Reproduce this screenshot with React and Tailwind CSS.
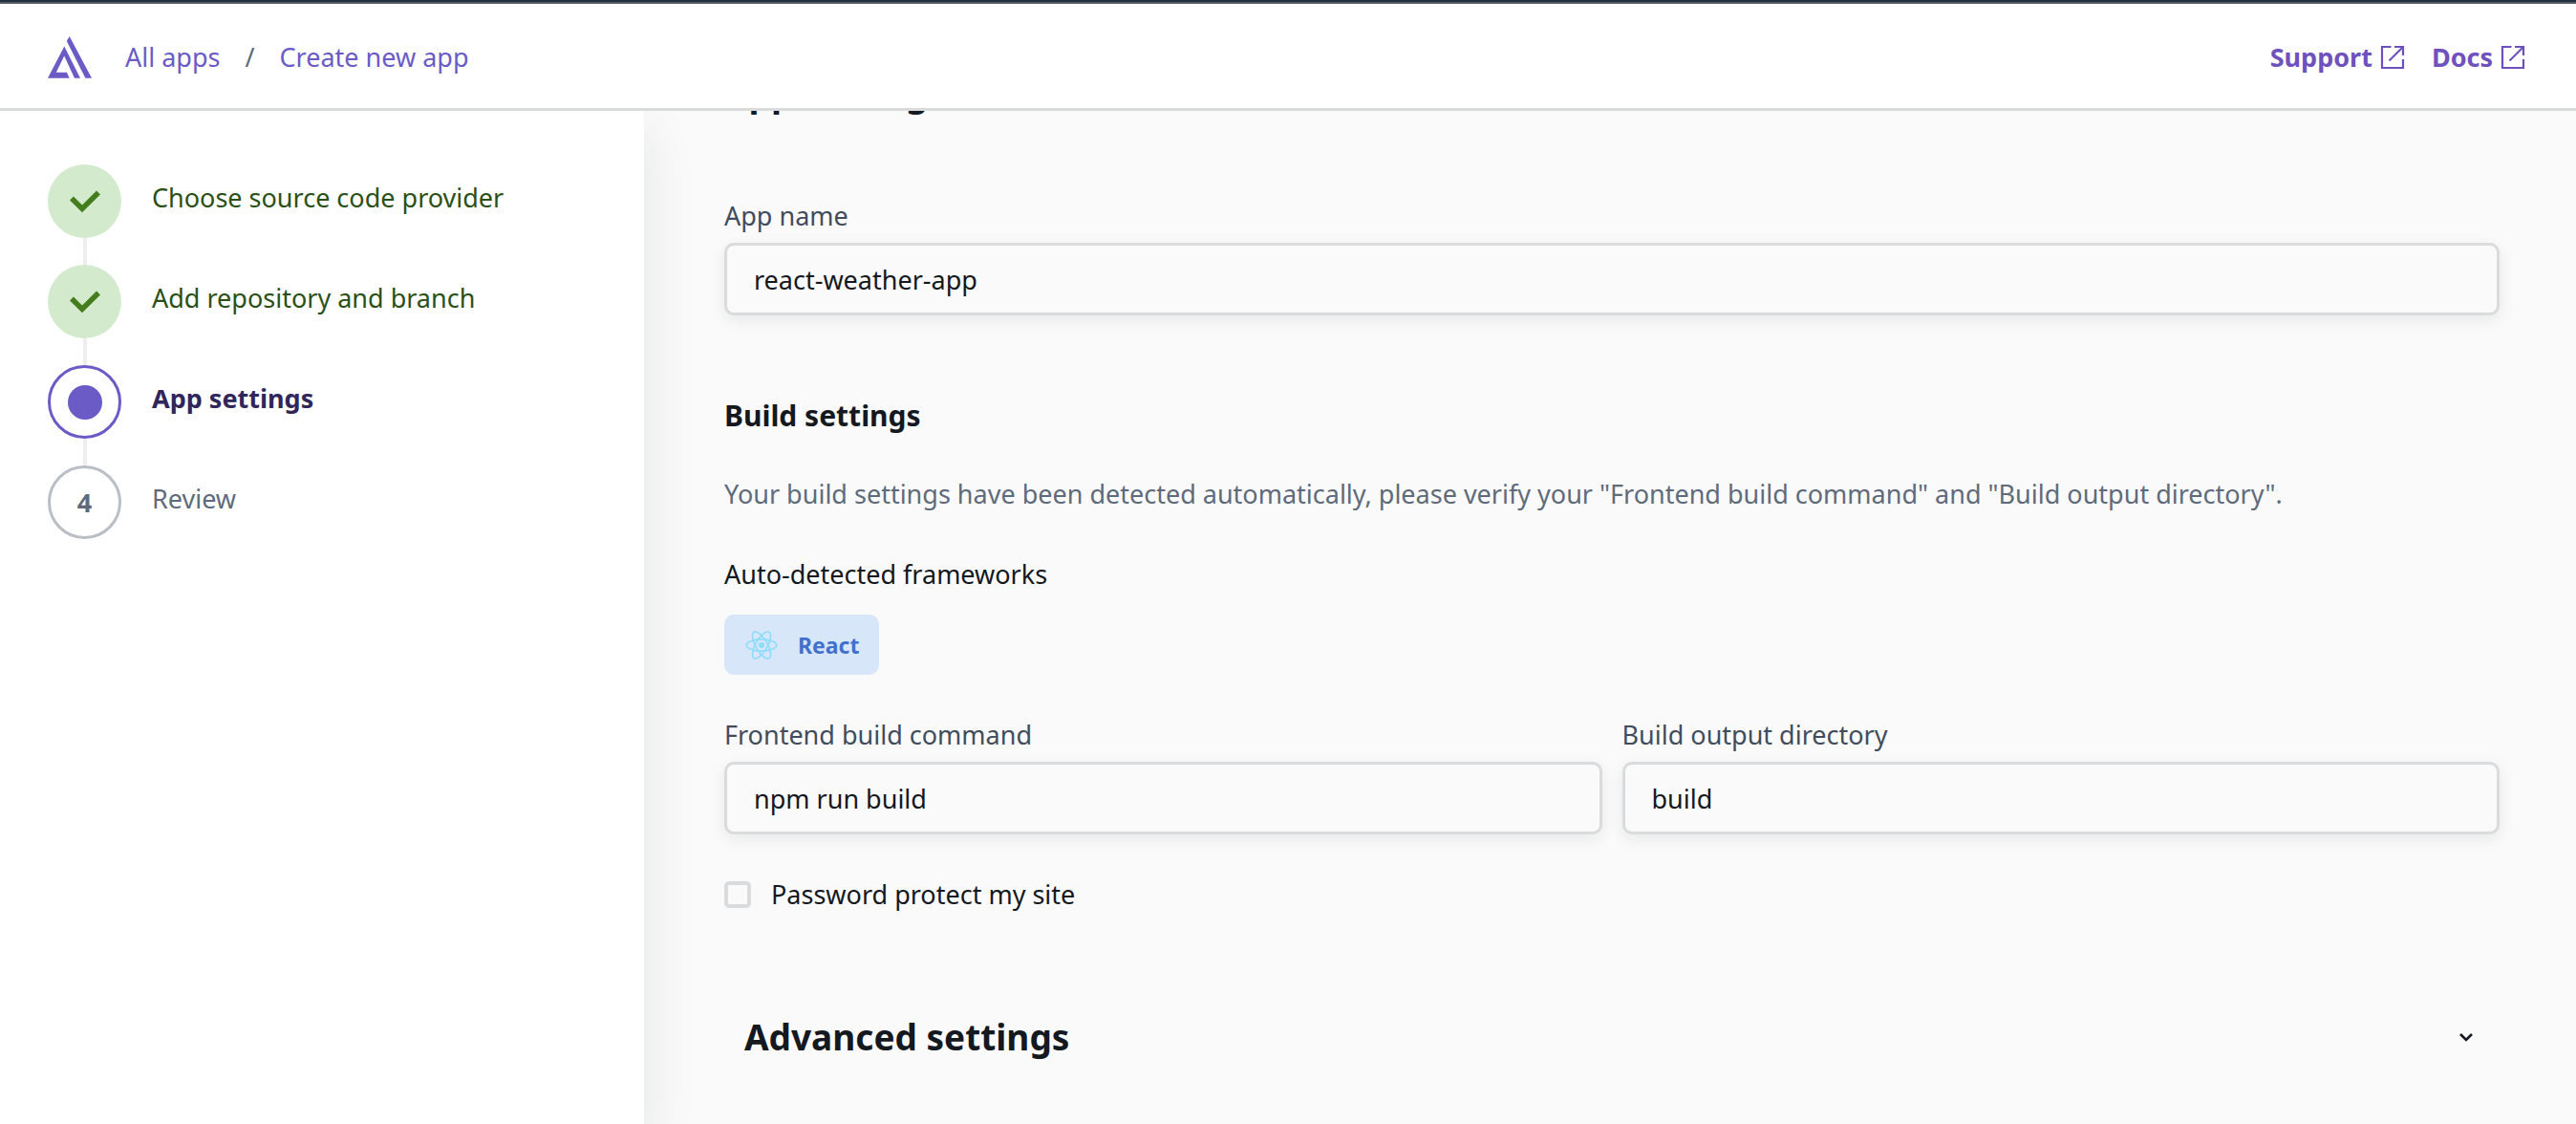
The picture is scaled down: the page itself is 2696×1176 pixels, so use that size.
const STEPS = [
  { label: "Choose source code provider", state: "done" },
  { label: "Add repository and branch", state: "done" },
  { label: "App settings", state: "current" },
  { label: "Review", state: "upcoming" },
];

const LABEL_STYLE = {
  done: "text-[#2b5017]",
  current: "font-bold text-[#30265a]",
  upcoming: "text-[#5f6b7a]",
};

function Logo() {
  return (
    <svg viewBox="0 0 46 44" className="h-[44px] w-[46px]" fill="#6b5bc7" aria-hidden="true">
      <path fillRule="evenodd" d="M17.3 10.5L34 43.7H28L17.2 20.5L8.8 37.8H20L22.6 43.7H0Z" />
      <path d="M19.8 5L22.7 0L46 43.7H39.4Z" />
    </svg>
  );
}

function ExternalIcon() {
  return (
    <svg viewBox="0 0 26 26" className="size-[26px]" fill="none" stroke="currentColor" strokeWidth="2.2" aria-hidden="true">
      <path d="M11.5 2H2V24H24V15" />
      <path d="M15 2H24V11" />
      <path d="M24 2L9.5 16.5" />
    </svg>
  );
}

function CheckIcon() {
  return (
    <svg viewBox="0 0 32 24" className="h-[24px] w-[32px]" fill="none" stroke="#447d1e" strokeWidth="5.6" aria-hidden="true">
      <path d="M2 8.6L13 19.4L30 2.6" />
    </svg>
  );
}

function ReactIcon() {
  return (
    <svg viewBox="-18 -16 36 32" className="h-[32px] w-[36px]" fill="none" stroke="#8edcfb" strokeWidth="1.6" aria-hidden="true">
      <circle r="3.1" fill="#8edcfb" stroke="none" />
      <ellipse rx="15.8" ry="6.1" />
      <ellipse rx="15.8" ry="6.1" transform="rotate(60)" />
      <ellipse rx="15.8" ry="6.1" transform="rotate(120)" />
    </svg>
  );
}

function Marker({ state, number }) {
  if (state === "done") {
    return (
      <span className="flex size-[77px] items-center justify-center rounded-full bg-[#d3eacd]">
        <CheckIcon />
      </span>
    );
  }
  if (state === "current") {
    return (
      <span className="flex size-[77px] items-center justify-center rounded-full border-[3px] border-[#6b5bc7]">
        <span className="size-[36px] rounded-full bg-[#6b5bc7]" />
      </span>
    );
  }
  return (
    <span className="flex size-[77px] items-center justify-center rounded-full border-[3px] border-[#babec5] font-bold text-[#5f6b7a]">
      {number}
    </span>
  );
}

function Field({ id, label, value }) {
  return (
    <div className="flex flex-col gap-[7px]">
      <label htmlFor={id} className="text-[#414d5c]">
        {label}
      </label>
      <input
        id={id}
        type="text"
        defaultValue={value}
        className="h-[76px] w-full rounded-[10px] border-[3px] border-[#d9dbdc] bg-[#fafafa] px-[28px] text-[#14181f] shadow-[0_5px_16px_rgba(13,26,38,0.08)] outline-none"
      />
    </div>
  );
}

export default function App() {
  return (
    <div className="flex h-screen flex-col overflow-hidden bg-[#fafafa] font-['Noto_Sans',sans-serif] text-[27px] leading-[42px] text-[#14181f]">
      <header className="relative z-20 flex h-[116px] shrink-0 flex-col border-b-[3px] border-[#d9dbdb] bg-white">
        <div className="h-[4px] shrink-0 border-b-2 border-[#545b64] bg-[#232f3e]" />
        <div className="flex flex-1 items-center justify-between pt-[2px] pr-[53px] pl-[50px]">
          <nav aria-label="Breadcrumb" className="flex items-center text-[#6b5bc7]">
            <Logo />
            <a href="#apps" className="ml-[35px]">All apps</a>
            <span className="mx-[26px] text-[#5f6b7a]">/</span>
            <a href="#create">Create new app</a>
          </nav>
          <nav aria-label="Help" className="flex items-center gap-[28px] font-bold text-[#6f51be]">
            <a href="#support" className="flex items-center gap-[8px]">
              Support <ExternalIcon />
            </a>
            <a href="#docs" className="flex items-center gap-[8px]">
              Docs <ExternalIcon />
            </a>
          </nav>
        </div>
      </header>

      <div className="grid min-h-0 flex-1 grid-cols-[1fr_3fr]">
        <aside className="relative z-10 bg-white pt-[56px] pl-[50px] shadow-[0_21px_53px_rgba(13,26,38,0.1)]">
          <ol>
            {STEPS.map((step, i) => (
              <li key={step.label} className="flex gap-[32px]" aria-current={step.state === "current" ? "step" : undefined}>
                <div className="flex flex-col items-center">
                  <Marker state={step.state} number={i + 1} />
                  {i < STEPS.length - 1 && <span className="h-[28px] w-[4px] bg-[#eeeeee]" />}
                </div>
                <span className={`pt-[14px] ${LABEL_STYLE[step.state]}`}>{step.label}</span>
              </li>
            ))}
          </ol>
        </aside>

        <main className="min-w-0 overflow-hidden pr-[80px] pl-[84px]">
          <form className="-mt-[42px] flex flex-col">
            <h1 className="text-[37px] leading-[46px] font-bold">App settings</h1>
            <div className="mt-[85px]">
              <Field id="app-name" label="App name" value="react-weather-app" />
            </div>

            <h2 className="mt-[86px] text-[30px] leading-[38px] font-bold">Build settings</h2>
            <p className="mt-[42px] text-[#5f6b7a]">
              Your build settings have been detected automatically, please verify your "Frontend build command" and
              "Build output directory".
            </p>
            <p className="mt-[42px]">Auto-detected frameworks</p>
            <div className="mt-[21px] flex h-[63px] items-center gap-[20px] self-start rounded-[10px] bg-[#d8e6f9] px-[21px] text-[23px] font-bold text-[#4270cf]">
              <ReactIcon />
              React
            </div>

            <div className="mt-[42px] grid grid-cols-2 gap-[21px]">
              <Field id="build-command" label="Frontend build command" value="npm run build" />
              <Field id="output-directory" label="Build output directory" value="build" />
            </div>

            <label className="mt-[42px] flex items-center gap-[21px] self-start">
              <input type="checkbox" className="size-[28px] appearance-none rounded-[5px] border-4 border-[#d9dbdc] checked:bg-[#6b5bc7]" />
              Password protect my site
            </label>

            <button type="button" aria-expanded="false" className="mt-[105px] flex items-center justify-between pr-[28px] pl-[21px] text-left text-[37px] leading-[46px] font-bold">
              Advanced settings
              <svg viewBox="0 0 14 10" className="h-[10px] w-[14px]" fill="none" stroke="currentColor" strokeWidth="2.6" aria-hidden="true">
                <path d="M1 2L7 8L13 2" />
              </svg>
            </button>
          </form>
        </main>
      </div>
    </div>
  );
}
